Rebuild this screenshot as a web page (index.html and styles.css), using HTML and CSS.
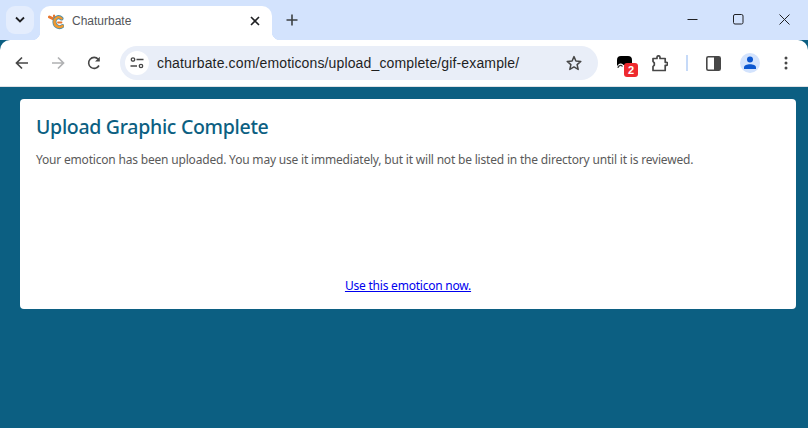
FILE: index.html
```html
<!DOCTYPE html>
<html lang="en">
<head>
  <meta charset="UTF-8">
  <title>Chaturbate</title>
  <link rel="stylesheet" href="styles.css">
</head>
<body>
  <div class="tabstrip">
    <div class="tab-search">
      <svg width="12" height="8" viewBox="0 0 12 8"><path d="M2 1.500 6 5.500 10 1.500" fill="none" stroke="#202124" stroke-width="1.800"/></svg>
    </div>
    <div class="tab">
      <svg class="favicon" width="16" height="16" viewBox="0 0 16 16">
        <path d="M1.500 3 4.500 4.500" fill="none" stroke="#e8762c" stroke-width="3" stroke-linecap="round"/>
        <path d="M6 1.500 6.500 5" fill="none" stroke="#e8762c" stroke-width="2.200" stroke-linecap="round"/>
        <path d="M13.500 4.500C10.500 1.500 6 4 6.500 8.500c.4 4 5 6 8 3.500" fill="none" stroke="#4f8fa8" stroke-width="4" stroke-linecap="round"/>
        <path d="M13.500 4.500C10.500 1.500 6 4 6.500 8.500c.4 4 5 6 8 3.500" fill="none" stroke="#f2992e" stroke-width="2.400" stroke-linecap="round"/>
        <path d="M10 8.500h3.500" stroke="#e8762c" stroke-width="1.800" stroke-linecap="round"/>
      </svg>
      <span class="tab-title">Chaturbate</span>
      <svg class="tab-close" width="10" height="10" viewBox="0 0 10 10"><path d="M1 1 9 9M9 1 1 9" stroke="#202124" stroke-width="1.600"/></svg>
    </div>
    <svg class="new-tab" width="12" height="12" viewBox="0 0 12 12"><path d="M6 .5v11M.5 6h11" stroke="#3c4043" stroke-width="1.600"/></svg>
    <div class="window-controls">
      <svg width="11" height="11" viewBox="0 0 11 11"><path d="M.5 5.500h10" stroke="#202124" stroke-width="1"/></svg>
      <svg width="11" height="11" viewBox="0 0 11 11"><rect x=".5" y=".5" width="9.500" height="9.500" rx="1.500" fill="none" stroke="#202124"/></svg>
      <svg width="11" height="11" viewBox="0 0 11 11"><path d="M.5 .5 10.500 10.500M10.500 .5 .5 10.500" stroke="#202124"/></svg>
    </div>
  </div>

  <div class="toolbar">
    <svg class="nav-icon" width="14" height="14" viewBox="0 0 14 14"><path d="M13 7H2M7 1.500 1.500 7 7 12.500" fill="none" stroke="#474747" stroke-width="1.700"/></svg>
    <svg class="nav-icon" width="14" height="14" viewBox="0 0 14 14"><path d="M1 7h11M7 1.500 12.500 7 7 12.500" fill="none" stroke="#b0b1b3" stroke-width="1.700"/></svg>
    <svg class="nav-icon" width="14" height="14" viewBox="0 0 14 14"><path d="M12 9.500A5.500 5.500 0 1 1 11.300 3.300" fill="none" stroke="#474747" stroke-width="1.600"/><path d="M12.800 .8v4.700H8.100z" fill="#474747"/></svg>
    <div class="omnibox">
      <div class="site-info">
        <svg width="14" height="12" viewBox="0 0 14 12"><circle cx="3" cy="2.500" r="1.700" fill="none" stroke="#474747" stroke-width="1.300"/><path d="M6.500 2.500H13.500M.5 9H7" stroke="#474747" stroke-width="1.300"/><circle cx="11" cy="9" r="1.700" fill="none" stroke="#474747" stroke-width="1.300"/></svg>
      </div>
      <span class="url">chaturbate.com/emoticons/upload_complete/gif-example/</span>
      <svg class="star" width="16" height="16" viewBox="0 0 16 16"><path d="M8 1.600 9.900 6 14.800 6.400 11.100 9.600 12.200 14.400 8 11.900 3.800 14.400 4.900 9.600 1.200 6.400 6.100 6Z" fill="none" stroke="#474747" stroke-width="1.500" stroke-linejoin="round"/></svg>
    </div>
    <div class="actions">
      <div class="ext-badge-wrap">
        <svg width="15" height="15" viewBox="0 0 15 15"><path d="M0 4a4 4 0 0 1 4-4h7a4 4 0 0 1 4 4v5H6.500a3 3 0 0 0-3-1.500A3 3 0 0 0 .8 9.500H0z" fill="#000"/><path d="M1 12a2.500 2.500 0 0 1 4.500-1.500" fill="none" stroke="#333" stroke-width="1.200"/></svg>
        <span class="badge">2</span>
      </div>
      <svg class="ext-puzzle" width="17" height="17" viewBox="0 0 17 17"><path d="M2 3.500H6V2.300a1.500 1.500 0 0 1 3 0V3.500H14.200V7.300H15.200a1.500 1.500 0 0 1 0 3H14.200V15.500H2V11.500L3.300 10.200V7.800L2 6.500Z" fill="none" stroke="#474747" stroke-width="1.700" stroke-linejoin="round"/></svg>
      <span class="divider"></span>
      <svg class="side-panel" width="15" height="15" viewBox="0 0 15 15"><rect x=".8" y=".8" width="13.400" height="13.400" rx="1.500" fill="none" stroke="#474747" stroke-width="1.600"/><rect x="8" y="1" width="6" height="13" fill="#474747"/></svg>
      <div class="avatar">
        <svg width="12" height="14" viewBox="0 0 12 14"><circle cx="6" cy="3.500" r="3" fill="#0b57d0"/><path d="M0 13v-1.500C0 9.500 3 8.300 6 8.300s6 1.200 6 3.200V13z" fill="#0b57d0"/></svg>
      </div>
      <svg class="menu" width="4" height="14" viewBox="0 0 4 14"><circle cx="2" cy="2" r="1.500" fill="#474747"/><circle cx="2" cy="7" r="1.500" fill="#474747"/><circle cx="2" cy="12" r="1.500" fill="#474747"/></svg>
    </div>
  </div>

  <div class="page">
    <div class="card">
      <h1>Upload Graphic Complete</h1>
      <p class="message">Your emoticon has been uploaded. You may use it immediately, but it will not be listed in the directory until it is reviewed.</p>
      <p class="use-link"><a href="#">Use this emoticon now.</a></p>
    </div>
  </div>
</body>
</html>
```

FILE: styles.css
```css
html, body { margin: 0; padding: 0; height: 100%; overflow: hidden; }
body {
  font-family: "Noto Sans", sans-serif;
  background-color: #0c5f82;
  display: flex;
  flex-direction: column;
}

/* browser frame */
.tabstrip {
  height: 40px;
  background-color: #d3e3fd;
  display: flex;
  align-items: flex-start;
  flex-shrink: 0;
}
.tab-search {
  width: 28px;
  height: 28px;
  margin: 6px 0 0 6px;
  border-radius: 9px;
  background-color: #e4edfd;
  display: flex;
  justify-content: center;
  align-items: center;
}
.tab {
  position: relative;
  width: 232px;
  height: 34px;
  margin: 6px 0 0 6px;
  padding: 0 12px 0 8px;
  box-sizing: border-box;
  background-color: white;
  border-radius: 10px 10px 0 0;
  display: flex;
  align-items: center;
}
/* flared bottom corners of the active tab */
.tab::before, .tab::after {
  content: "";
  position: absolute;
  bottom: 0;
  width: 8px;
  height: 8px;
}
.tab::before {
  left: -8px;
  background: radial-gradient(circle at 0 0, #d3e3fd 8px, white 8.5px);
}
.tab::after {
  right: -8px;
  background: radial-gradient(circle at 100% 0, #d3e3fd 8px, white 8.5px);
}
.favicon { margin-right: 8px; margin-top: -3px; }
.tab-title {
  font-family: "Liberation Sans", Arial, sans-serif;
  font-size: 12px;
  color: #54565a;
  flex: 1;
  margin-top: -4px;
}
.tab-close { margin-top: -5px; }
.new-tab { margin: 14px 0 0 14px; }
.window-controls {
  margin-left: auto;
  display: flex;
  gap: 35px;
  padding: 14px 18px 0 0;
}

.toolbar {
  height: 46px;
  background-color: white;
  border-bottom: 1px solid #dfe1e5;
  border-radius: 10px 10px 0 0;
  display: flex;
  align-items: center;
  flex-shrink: 0;
  position: relative;
  padding-left: 15px;
}
.nav-icon { margin-right: 22px; }
.nav-icon:nth-child(3) { margin-right: 19px; }
.omnibox {
  width: 478px;
  height: 34px;
  border-radius: 17px;
  background-color: #e9eef8;
  display: flex;
  align-items: center;
  padding: 0 16px 0 5px;
  box-sizing: border-box;
}
.site-info {
  width: 24px;
  height: 24px;
  border-radius: 50%;
  background-color: white;
  display: flex;
  justify-content: center;
  align-items: center;
  margin-right: 8px;
}
.url {
  font-family: "Liberation Sans", Arial, sans-serif;
  font-size: 14px;
  color: #1f1f1f;
  flex: 1;
  letter-spacing: 0.14px;
}
.actions {
  display: flex;
  align-items: center;
  margin-left: 19px;
}
.ext-badge-wrap {
  position: relative;
  width: 15px;
  height: 14px;
}
.ext-badge-wrap svg { display: block; }
.badge {
  position: absolute;
  left: 7px;
  top: 7px;
  width: 14px;
  height: 14px;
  border-radius: 3px;
  background-color: #ee2a2f;
  color: white;
  font-family: "Liberation Sans", Arial, sans-serif;
  font-size: 11px;
  font-weight: bold;
  line-height: 14px;
  text-align: center;
}
.ext-puzzle { margin-left: 19px; }
.divider {
  width: 2px;
  height: 16px;
  margin: 0 18px 0 18px;
  background-color: #c6daf8;
}
.side-panel { margin-right: 19px; }
.avatar {
  width: 20px;
  height: 20px;
  border-radius: 50%;
  background-color: #d3e3fd;
  display: flex;
  justify-content: center;
  align-items: flex-end;
  overflow: hidden;
  margin-right: 24px;
}
.avatar svg { margin-bottom: 3px; }

/* page content */
.page {
  flex: 1;
  padding: 12px 12px 0 20px;
  background-color: #0c5f82;
}
.card {
  width: 776px;
  height: 210px;
  padding: 15px 16px;
  box-sizing: border-box;
  background-color: white;
  border-radius: 4px;
  display: flex;
  flex-direction: column;
}
h1 {
  margin: 0;
  font-size: 19.500px;
  font-weight: 500;
  line-height: 26px;
  letter-spacing: -0.3px;
  color: #0c5f82;
}
.message {
  margin: 12px 0 0;
  font-size: 12px;
  line-height: 16px;
  letter-spacing: -0.19px;
  color: #5a5a5a;
}
.use-link {
  margin: auto 0 0;
  font-size: 12px;
  line-height: 16px;
  letter-spacing: -0.22px;
  text-align: center;
}
.use-link a { color: #0000ee; }
```
